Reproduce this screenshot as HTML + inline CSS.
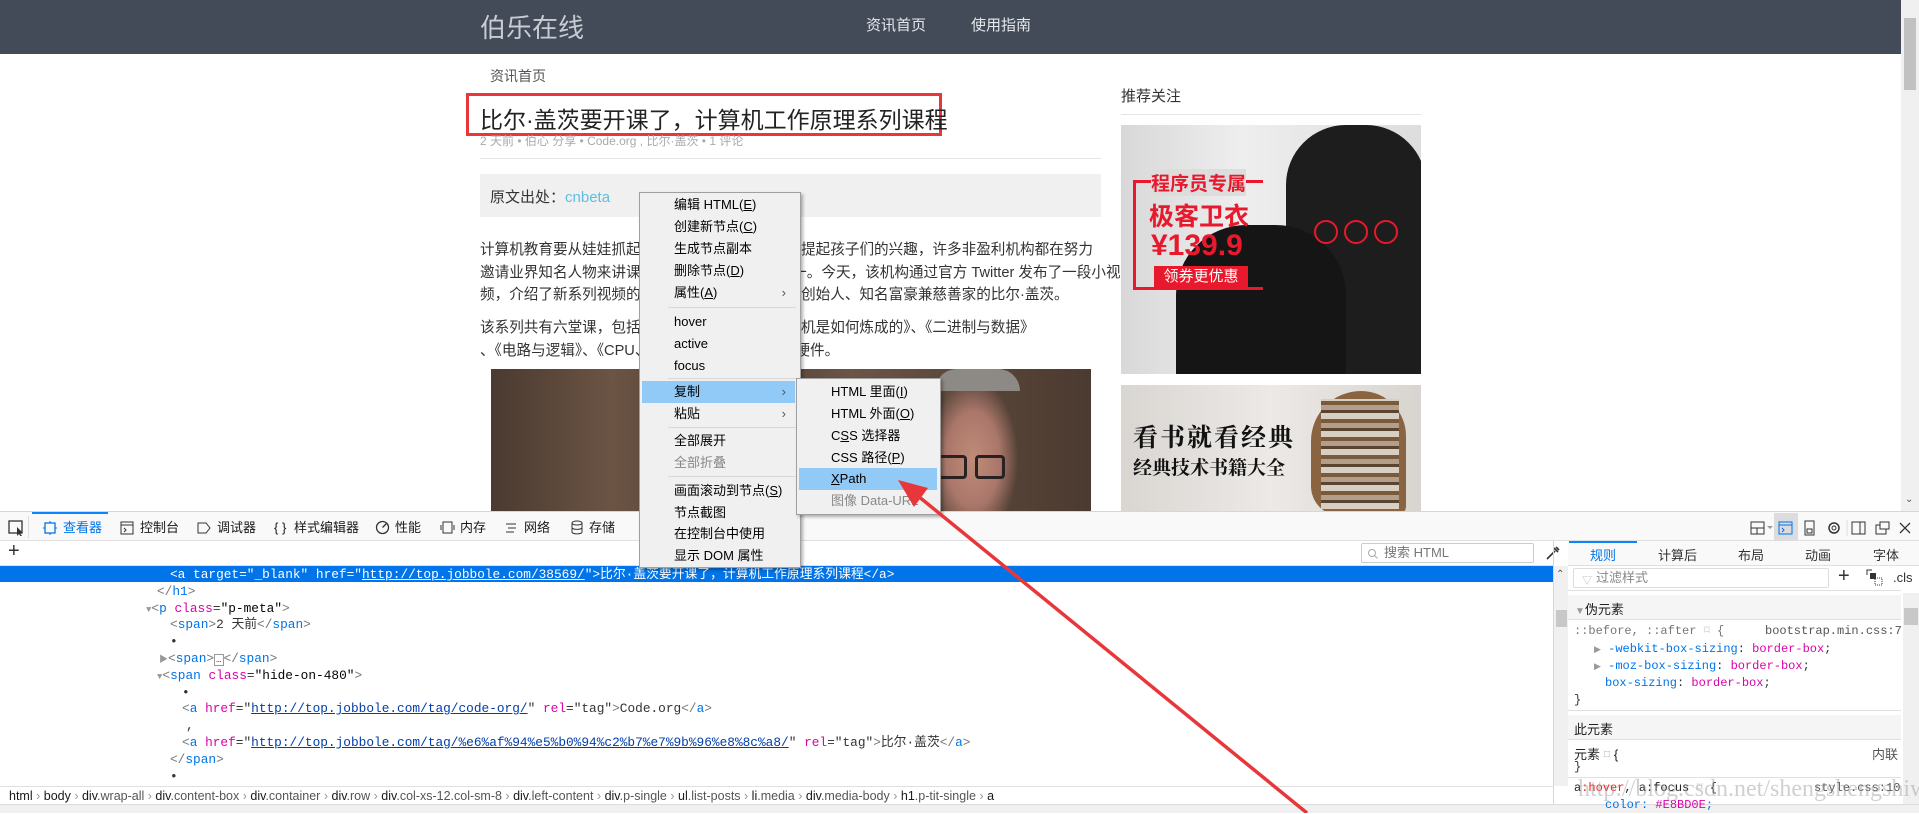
<!DOCTYPE html>
<html><head><meta charset="utf-8">
<style>
*{margin:0;padding:0;box-sizing:border-box}
body{width:1919px;height:813px;overflow:hidden;position:relative;background:#fff;font-family:"Liberation Sans","Noto Sans CJK SC",sans-serif;color:#333}
.a{position:absolute;white-space:nowrap}
.nav{left:0;top:0;width:1919px;height:54px;background:#434a58}
.mono{font-family:"Liberation Mono","Noto Sans CJK SC",monospace;font-size:12.8px}
.t{color:#0074e8}.n{color:#dd00a9}.v{color:#030303}.p{color:#777}.u{text-decoration:underline;color:#003eaa}
.ml{position:absolute;left:0;height:17px;line-height:17px;white-space:nowrap}
.menu{background:#f0f0f0;border:1px solid #a0a0a0;box-shadow:2px 2px 3px rgba(0,0,0,.3);font-size:13px;color:#000}
.mi{position:absolute;left:0;right:0;height:22px;line-height:22px;padding-left:34px}
.sep{position:absolute;left:28px;right:4px;height:1px;background:#d7d7d7}
.tab{position:absolute;top:512px;height:29px;line-height:32px;font-size:13px;color:#18191a}
.rl{position:absolute;left:1574px;font-family:"Liberation Mono",monospace;font-size:12px;white-space:nowrap;height:17px;line-height:17px}
.pl{position:absolute;left:480px;font-size:14.6px;color:#333;white-space:nowrap}
</style></head><body>
<div class="a nav"></div>
<div class="a" style="left:480px;top:8px;font-size:26px;color:#c8ccd3">伯乐在线</div>
<div class="a" style="left:866px;top:14px;font-size:15px;color:#e6e8eb">资讯首页</div>
<div class="a" style="left:971px;top:14px;font-size:15px;color:#e6e8eb">使用指南</div>
<div class="a" style="left:1901px;top:0;width:18px;height:512px;background:#f0f0f0"></div>
<div class="a" style="left:1904px;top:18px;width:12px;height:72px;background:#c1c1c1"></div>
<div class="a" style="left:1905px;top:494px;font-size:10px;color:#555">⌄</div>

<div class="a" style="left:490px;top:66px;font-size:14px;color:#555">资讯首页</div>
<div class="a" style="left:466px;top:93px;width:476px;height:43px;border:3px solid #e8373a"></div>
<div class="a" style="left:480px;top:101px;font-size:23px;color:#222">比尔·盖茨要开课了，计算机工作原理系列课程</div>
<div class="a" style="left:480px;top:132px;font-size:12px;color:#aaa">2 天前 •  伯心 分享   • Code.org , 比尔·盖茨  • 1 评论</div>
<div class="a" style="left:480px;top:158px;width:621px;height:1px;background:#e5e5e5"></div>
<div class="a" style="left:480px;top:174px;width:621px;height:43px;background:#f0f0f0"></div>
<div class="a" style="left:490px;top:186px;font-size:15px;color:#333">原文出处：<span style="color:#5bc0de">cnbeta</span></div>
<div class="pl" style="top:238px">计算机教育要从娃娃抓起，这样才能更好的激发和提起孩子们的兴趣，许多非盈利机构都在努力</div>
<div class="pl" style="top:261px">邀请业界知名人物来讲课，Code.org 就是其中之一。今天，该机构通过官方 Twitter 发布了一段小视</div>
<div class="pl" style="top:283px">频，介绍了新系列视频的讲师之一——也就是微软创始人、知名富豪兼慈善家的比尔·盖茨。</div>
<div class="pl" style="top:316px">该系列共有六堂课，包括《计算机是什么》、《计算机是如何炼成的》、《二进制与数据》</div>
<div class="pl" style="top:339px">、《电路与逻辑》、《CPU、内存、输入输出》、《软硬件。</div>
<div class="a" style="left:491px;top:369px;width:600px;height:143px;background:linear-gradient(90deg,#4a3a30,#6b5444 20%,#4e3d33 40%,#6a5546 60%,#5a463a 80%,#4b3a30)"></div>
<div class="a" style="left:925px;top:369px;width:100px;height:143px;background:radial-gradient(ellipse 45px 80px at 48px 90px,#c08c78 0,#a9766a 60%,rgba(110,90,80,0) 100%)"></div>
<div class="a" style="left:935px;top:369px;width:85px;height:22px;border-radius:40px 40px 0 0;background:#8d8985"></div>
<div class="a" style="left:935px;top:455px;width:32px;height:24px;border:3px solid #2a2222;border-radius:4px"></div>
<div class="a" style="left:975px;top:455px;width:30px;height:24px;border:3px solid #2a2222;border-radius:4px"></div>

<div class="a" style="left:1121px;top:85px;font-size:15px;color:#333">推荐关注</div>
<div class="a" style="left:1121px;top:114px;width:300px;height:1px;background:#e5e5e5"></div>
<div class="a" style="left:1121px;top:125px;width:300px;height:249px;background:linear-gradient(90deg,#d8d8d8,#eee 40%,#ddd);overflow:hidden">
  <div class="a" style="left:165px;top:0;width:140px;height:249px;background:#1d1d1d;border-radius:60px 60px 0 0"></div>
  <div class="a" style="left:55px;top:100px;width:170px;height:150px;background:#151515;border-radius:70px 70px 0 0"></div>
  <div class="a" style="left:12px;top:55px;width:130px;height:110px;border:3px solid #e8192c;border-right:none"></div>
  <div class="a" style="left:30px;top:44px;font-size:19px;font-weight:bold;color:#e8192c;background:#ddd">程序员专属</div>
  <div class="a" style="left:28px;top:72px;font-size:25px;font-weight:bold;color:#e8192c">极客卫衣</div>
  <div class="a" style="left:30px;top:104px;font-size:30px;font-weight:bold;color:#e8192c">¥139.9</div>
  <div class="a" style="left:33px;top:141px;width:94px;height:22px;background:#e8192c;color:#fff;font-size:15px;line-height:22px;text-align:center">领券更优惠</div>
  <div class="a" style="left:193px;top:95px;width:24px;height:24px;border:2px solid #e8192c;border-radius:50%"></div>
  <div class="a" style="left:223px;top:95px;width:24px;height:24px;border:2px solid #e8192c;border-radius:50%"></div>
  <div class="a" style="left:253px;top:95px;width:24px;height:24px;border:2px solid #e8192c;border-radius:50%"></div>
</div>
<div class="a" style="left:1121px;top:385px;width:300px;height:127px;background:linear-gradient(90deg,#d9d6d2,#ece9e6 50%,#d8d4cf);overflow:hidden">
  <div class="a" style="left:12px;top:33px;font-size:25px;font-family:'Noto Serif CJK SC',serif;font-weight:bold;color:#111;letter-spacing:2px">看书就看经典</div>
  <div class="a" style="left:12px;top:68px;font-size:19px;font-family:'Noto Serif CJK SC',serif;font-weight:bold;color:#111">经典技术书籍大全</div>
  <div class="a" style="left:190px;top:6px;width:95px;height:125px;background:#8a6440;border-radius:50px 45px 10px 30px"></div>
  <div class="a" style="left:200px;top:14px;width:78px;height:110px;background:repeating-linear-gradient(0deg,#d8cfc4 0 6px,#5a4430 6px 9px,#b29e8a 9px 14px,#7a5a3a 14px 18px)"></div>
</div>

<div class="a" style="left:0;top:511px;width:1919px;height:302px;background:#fff;border-top:1px solid #d6d6d6"></div>
<div class="a" style="left:0;top:512px;width:1919px;height:29px;background:#f9f9fa;border-bottom:1px solid #e0e0e2"></div>
<div class="a" style="left:32px;top:512px;width:76px;height:2px;background:#0a84ff"></div>
<svg class="a" style="left:8px;top:520px" width="18" height="16"><rect x="1" y="1" width="13" height="12" fill="none" stroke="#333" stroke-width="1.3"/><path d="M9 7l6 6-3 0 2 3-1 1-2-3-2 2z" fill="#333"/></svg>
<div class="a" style="left:28px;top:516px;width:1px;height:22px;background:#ddd"></div>
<svg class="a" style="left:43px;top:521px" width="14" height="14"><rect x="2" y="2" width="10" height="10" fill="none" stroke="#0074e8" stroke-width="1.3"/><path d="M7 0v2M7 12v2M0 7h2M12 7h2" stroke="#0074e8"/></svg>
<div class="tab" style="left:63px;color:#0074e8">查看器</div>
<svg class="a" style="left:120px;top:521px" width="14" height="14"><rect x="1" y="1" width="12" height="12" fill="none" stroke="#333"/><path d="M1 4h12M4 7l2 2-2 2" stroke="#333" fill="none"/></svg>
<div class="tab" style="left:140px">控制台</div>
<svg class="a" style="left:197px;top:521px" width="14" height="14"><path d="M1 2h8l4 5-4 5H1z" fill="none" stroke="#333"/></svg>
<div class="tab" style="left:217px">调试器</div>
<div class="tab" style="left:274px">{ }</div>
<div class="tab" style="left:294px">样式编辑器</div>
<svg class="a" style="left:375px;top:520px" width="15" height="15"><circle cx="7.5" cy="7.5" r="6" fill="none" stroke="#333" stroke-width="1.3"/><path d="M7.5 7.5l4-4" stroke="#333" stroke-width="1.3"/></svg>
<div class="tab" style="left:395px">性能</div>
<svg class="a" style="left:440px;top:520px" width="15" height="15"><rect x="3" y="2" width="9" height="11" fill="none" stroke="#333"/><path d="M1 5v5M14 5v5" stroke="#333"/></svg>
<div class="tab" style="left:460px">内存</div>
<svg class="a" style="left:504px;top:521px" width="14" height="14"><path d="M2 3h10M4 7h8M2 11h8" stroke="#333"/></svg>
<div class="tab" style="left:524px">网络</div>
<svg class="a" style="left:570px;top:520px" width="14" height="15"><ellipse cx="7" cy="3" rx="5" ry="2" fill="none" stroke="#333"/><path d="M2 3v9c0 2.5 10 2.5 10 0V3M2 7.5c0 2.5 10 2.5 10 0" fill="none" stroke="#333"/></svg>
<div class="tab" style="left:589px">存储</div>
<div class="a" style="left:1774px;top:513px;width:24px;height:28px;background:#dcdcdf"></div>
<svg class="a" style="left:1750px;top:520px" width="170" height="16">
<rect x="1" y="2" width="13" height="12" fill="none" stroke="#333"/><path d="M1 8h13M7 8v6" stroke="#333"/><path d="M17 6h6l-3 3z" fill="#999"/>
<rect x="29" y="2" width="13" height="12" fill="none" stroke="#0074e8"/><path d="M29 5h13M32 8l2 2-2 2" stroke="#0074e8" fill="none"/>
<rect x="55" y="1" width="9" height="14" fill="none" stroke="#333"/><rect x="57" y="9" width="5" height="4" fill="none" stroke="#333"/>
<circle cx="84" cy="8" r="5" fill="none" stroke="#333" stroke-width="1.5"/><circle cx="84" cy="8" r="2" fill="none" stroke="#333"/>
<path d="M97 0v16" stroke="#ddd"/>
<rect x="102" y="2" width="13" height="12" fill="none" stroke="#333"/><path d="M110 2v12" stroke="#333"/>
<rect x="126" y="5" width="10" height="9" fill="none" stroke="#333"/><rect x="130" y="2" width="9" height="7" fill="#f9f9fa" stroke="#333"/>
<path d="M150 3l10 10M160 3l-10 10" stroke="#333" stroke-width="1.3"/>
</svg>
<div class="a" style="left:0;top:541px;width:1553px;height:25px;background:#fff;border-bottom:1px solid #e0e0e2"></div>
<div class="a" style="left:8px;top:540px;font-size:20px;color:#333;font-weight:300">+</div>
<div class="a" style="left:1361px;top:543px;width:173px;height:20px;border:1px solid #ccc;border-radius:2px;font-size:13px;color:#777;line-height:18px;padding-left:22px">搜索 HTML</div>
<svg class="a" style="left:1367px;top:548px" width="12" height="12"><circle cx="5" cy="5" r="3.5" fill="none" stroke="#aaa"/><path d="M7.5 7.5l3 3" stroke="#aaa"/></svg>
<svg class="a" style="left:1545px;top:545px" width="16" height="16"><path d="M2 14l8-8M9 3l4 4M11 2l3 3" stroke="#333" stroke-width="1.6"/></svg>
<div class="a" style="left:1553px;top:541px;width:1px;height:263px;background:#d6d6d6"></div>
<div class="a" style="left:0;top:566px;width:1553px;height:16px;background:#0074e8"></div>
<div class="a mono" style="left:0;top:566px;width:1553px;height:220px">
<div class="ml" style="top:0;left:170px;color:#fff">&lt;a target="_blank" href="<span style="text-decoration:underline">http://top.jobbole.com/38569/</span>"&gt;比尔·盖茨要开课了，计算机工作原理系列课程&lt;/a&gt;</div>
<div class="ml" style="top:16.8px;left:157px"><span class="p">&lt;/</span><span class="t">h1</span><span class="p">&gt;</span></div>
<div class="ml" style="top:33.6px;left:146px"><span style="color:#999;font-size:9px">▼</span><span class="p">&lt;</span><span class="t">p</span> <span class="n">class</span>=<span class="v">"p-meta"</span><span class="p">&gt;</span></div>
<div class="ml" style="top:50.4px;left:170px"><span class="p">&lt;</span><span class="t">span</span><span class="p">&gt;</span>2 天前<span class="p">&lt;/</span><span class="t">span</span><span class="p">&gt;</span></div>
<div class="ml" style="top:67.2px;left:170px">•</div>
<div class="ml" style="top:84px;left:159px"><span style="color:#999;font-size:9px">▶</span><span class="p">&lt;</span><span class="t">span</span><span class="p">&gt;</span><span style="border:1px solid #999;font-size:9px;padding:0 1px">…</span><span class="p">&lt;/</span><span class="t">span</span><span class="p">&gt;</span></div>
<div class="ml" style="top:100.8px;left:157px"><span style="color:#999;font-size:9px">▼</span><span class="p">&lt;</span><span class="t">span</span> <span class="n">class</span>=<span class="v">"hide-on-480"</span><span class="p">&gt;</span></div>
<div class="ml" style="top:117.6px;left:182px">•</div>
<div class="ml" style="top:134.4px;left:182px"><span class="p">&lt;</span><span class="t">a</span> <span class="n">href</span>="<span class="u">http://top.jobbole.com/tag/code-org/</span>" <span class="n">rel</span>="tag"<span class="p">&gt;</span>Code.org<span class="p">&lt;/</span><span class="t">a</span><span class="p">&gt;</span></div>
<div class="ml" style="top:151.2px;left:186px">,</div>
<div class="ml" style="top:168px;left:182px"><span class="p">&lt;</span><span class="t">a</span> <span class="n">href</span>="<span class="u">http://top.jobbole.com/tag/%e6%af%94%e5%b0%94%c2%b7%e7%9b%96%e8%8c%a8/</span>" <span class="n">rel</span>="tag"<span class="p">&gt;</span>比尔·盖茨<span class="p">&lt;/</span><span class="t">a</span><span class="p">&gt;</span></div>
<div class="ml" style="top:184.8px;left:170px"><span class="p">&lt;/</span><span class="t">span</span><span class="p">&gt;</span></div>
<div class="ml" style="top:201.6px;left:170px">•</div>
</div>
<div class="a" style="left:1554px;top:566px;width:14px;height:220px;background:#f0f0f0"></div>
<div class="a" style="left:1556px;top:610px;width:11px;height:17px;background:#c8c8c8"></div>
<div class="a" style="left:1556px;top:569px;font-size:10px;color:#555">⌃</div>
<div class="a" style="left:0;top:786px;width:1553px;height:19px;border-top:1px solid #e0e0e2;font-size:12.5px;line-height:19px;color:#18191a;padding-left:9px">html <span style="color:#999">›</span> body <span style="color:#999">›</span> div<span style="color:#555">.wrap-all</span> <span style="color:#999">›</span> div<span style="color:#555">.content-box</span> <span style="color:#999">›</span> div<span style="color:#555">.container</span> <span style="color:#999">›</span> div<span style="color:#555">.row</span> <span style="color:#999">›</span> div<span style="color:#555">.col-xs-12.col-sm-8</span> <span style="color:#999">›</span> div<span style="color:#555">.left-content</span> <span style="color:#999">›</span> div<span style="color:#555">.p-single</span> <span style="color:#999">›</span> ul<span style="color:#555">.list-posts</span> <span style="color:#999">›</span> li<span style="color:#555">.media</span> <span style="color:#999">›</span> div<span style="color:#555">.media-body</span> <span style="color:#999">›</span> h1<span style="color:#555">.p-tit-single</span> <span style="color:#999">›</span> a</div>
<div class="a" style="left:0;top:804px;width:1919px;height:9px;background:#f0f0f0;border-top:1px solid #ddd"></div>

<div class="a" style="left:1568px;top:541px;width:351px;height:25px;background:#f9f9fa;border-bottom:1px solid #e0e0e2"></div>
<div class="a" style="left:1569px;top:541px;width:68px;height:2px;background:#0a84ff"></div>
<div class="a" style="left:1590px;top:545px;font-size:13px;color:#0074e8">规则</div>
<div class="a" style="left:1658px;top:545px;font-size:13px">计算后</div>
<div class="a" style="left:1738px;top:545px;font-size:13px">布局</div>
<div class="a" style="left:1805px;top:545px;font-size:13px">动画</div>
<div class="a" style="left:1873px;top:545px;font-size:13px">字体</div>
<div class="a" style="left:1573px;top:568px;width:256px;height:20px;border:1px solid #ddd;border-radius:2px;font-size:13px;color:#888;line-height:18px;padding-left:22px">过滤样式</div>
<div class="a" style="left:1582px;top:572px;font-size:10px;color:#bbb">▽</div>
<div class="a" style="left:1838px;top:565px;font-size:20px;color:#333">+</div>
<svg class="a" style="left:1866px;top:569px" width="18" height="18"><path d="M1 6V1h5" stroke="#333" fill="none"/><rect x="4" y="4" width="6" height="6" fill="#333"/><rect x="9" y="9" width="7" height="7" fill="none" stroke="#333" stroke-dasharray="1 1"/></svg>
<div class="a" style="left:1893px;top:570px;font-size:13px;color:#333">.cls</div>
<div class="a" style="left:1568px;top:590px;width:333px;height:1px;background:#e0e0e2"></div>
<div class="a" style="left:1568px;top:595px;width:333px;height:25px;background:#f5f5f5;border-bottom:1px solid #e0e0e2"></div>
<div class="a" style="left:1575px;top:599px;font-size:13px;color:#222"><span style="color:#999;font-size:10px">▼</span>伪元素</div>
<div class="rl" style="top:623px;color:#777">::before, ::after <span style="color:#ccc">⌑</span> {</div>
<div class="rl" style="top:623px;left:1765px;color:#555">bootstrap.min.css:7</div>
<div class="rl" style="top:641px;left:1594px"><span style="color:#999;font-size:9px">▶</span> <span style="color:#0074e8">-webkit-box-sizing</span>: <span style="color:#dd00a9">border-box</span>;</div>
<div class="rl" style="top:658px;left:1594px"><span style="color:#999;font-size:9px">▶</span> <span style="color:#0074e8">-moz-box-sizing</span>: <span style="color:#dd00a9">border-box</span>;</div>
<div class="rl" style="top:675px;left:1605px"><span style="color:#0074e8">box-sizing</span>: <span style="color:#dd00a9">border-box</span>;</div>
<div class="rl" style="top:692px">}</div>
<div class="a" style="left:1568px;top:710px;width:333px;height:1px;background:#e0e0e2"></div>
<div class="a" style="left:1568px;top:715px;width:333px;height:25px;background:#f5f5f5;border-bottom:1px solid #e0e0e2"></div>
<div class="a" style="left:1574px;top:719px;font-size:13px;color:#222">此元素</div>
<div class="a" style="left:1574px;top:744px;font-size:13px;color:#222">元素 <span style="color:#ccc">⌑</span> {</div>
<div class="a" style="left:1872px;top:744px;font-size:13px;color:#555">内联</div>
<div class="rl" style="top:759px">}</div>
<div class="a" style="left:1568px;top:777px;width:333px;height:1px;background:#e0e0e2"></div>
<div class="rl" style="top:780px;color:#222">a<span style="color:#e22">:hover</span>, a:focus <span style="color:#ccc">⌑</span> {</div>
<div class="rl" style="top:780px;left:1814px;color:#555">style.css:10</div>
<div class="rl" style="top:797px;left:1605px;color:#0074e8">color: <span style="color:#dd00a9">#E8BD0E</span>;</div>
<div class="a" style="left:1903px;top:593px;width:16px;height:211px;background:#f0f0f0"></div>
<div class="a" style="left:1904px;top:608px;width:14px;height:17px;background:#c8c8c8"></div>
<div class="a" style="left:1578px;top:776px;font-size:24px;font-family:'Liberation Serif',serif;color:rgba(150,150,150,.45)">http://blog.csdn.net/shengshengshiwo</div>

<div class="a menu" style="left:639px;top:192px;width:162px;height:376px">
<div class="mi" style="top:1px">编辑 HTML(<u>E</u>)</div>
<div class="mi" style="top:23px">创建新节点(<u>C</u>)</div>
<div class="mi" style="top:45px">生成节点副本</div>
<div class="mi" style="top:67px">删除节点(<u>D</u>)</div>
<div class="mi" style="top:89px">属性(<u>A</u>)<span style="position:absolute;right:14px;color:#555">›</span></div>
<div class="sep" style="top:114px"></div>
<div class="mi" style="top:118px">hover</div>
<div class="mi" style="top:140px">active</div>
<div class="mi" style="top:162px">focus</div>
<div class="sep" style="top:185px"></div>
<div class="mi" style="top:188px;left:2px;right:5px;background:#91c9f7;padding-left:32px">复制<span style="position:absolute;right:9px;color:#555">›</span></div>
<div class="mi" style="top:210px">粘贴<span style="position:absolute;right:14px;color:#555">›</span></div>
<div class="sep" style="top:234px"></div>
<div class="mi" style="top:237px">全部展开</div>
<div class="mi" style="top:259px;color:#888">全部折叠</div>
<div class="sep" style="top:283px"></div>
<div class="mi" style="top:287px">画面滚动到节点(<u>S</u>)</div>
<div class="mi" style="top:309px">节点截图</div>
<div class="mi" style="top:330px">在控制台中使用</div>
<div class="mi" style="top:352px">显示 DOM 属性</div>
</div>
<div class="a menu" style="left:796px;top:378px;width:145px;height:137px">
<div class="mi" style="top:2px">HTML 里面(<u>I</u>)</div>
<div class="mi" style="top:24px">HTML 外面(<u>O</u>)</div>
<div class="mi" style="top:46px">C<u>S</u>S 选择器</div>
<div class="mi" style="top:68px">CSS 路径(<u>P</u>)</div>
<div class="mi" style="top:89px;left:2px;right:3px;background:#91c9f7;padding-left:32px"><u>X</u>Path</div>
<div class="mi" style="top:111px;color:#888">图像 Data-URL</div>
</div>

<svg class="a" style="left:0;top:0" width="1919" height="813">
<line x1="1307" y1="813" x2="918" y2="496" stroke="#e8373a" stroke-width="3.5"/>
<polygon points="898,480 928,488 914,507" fill="#e8373a"/>
</svg>
</body></html>
